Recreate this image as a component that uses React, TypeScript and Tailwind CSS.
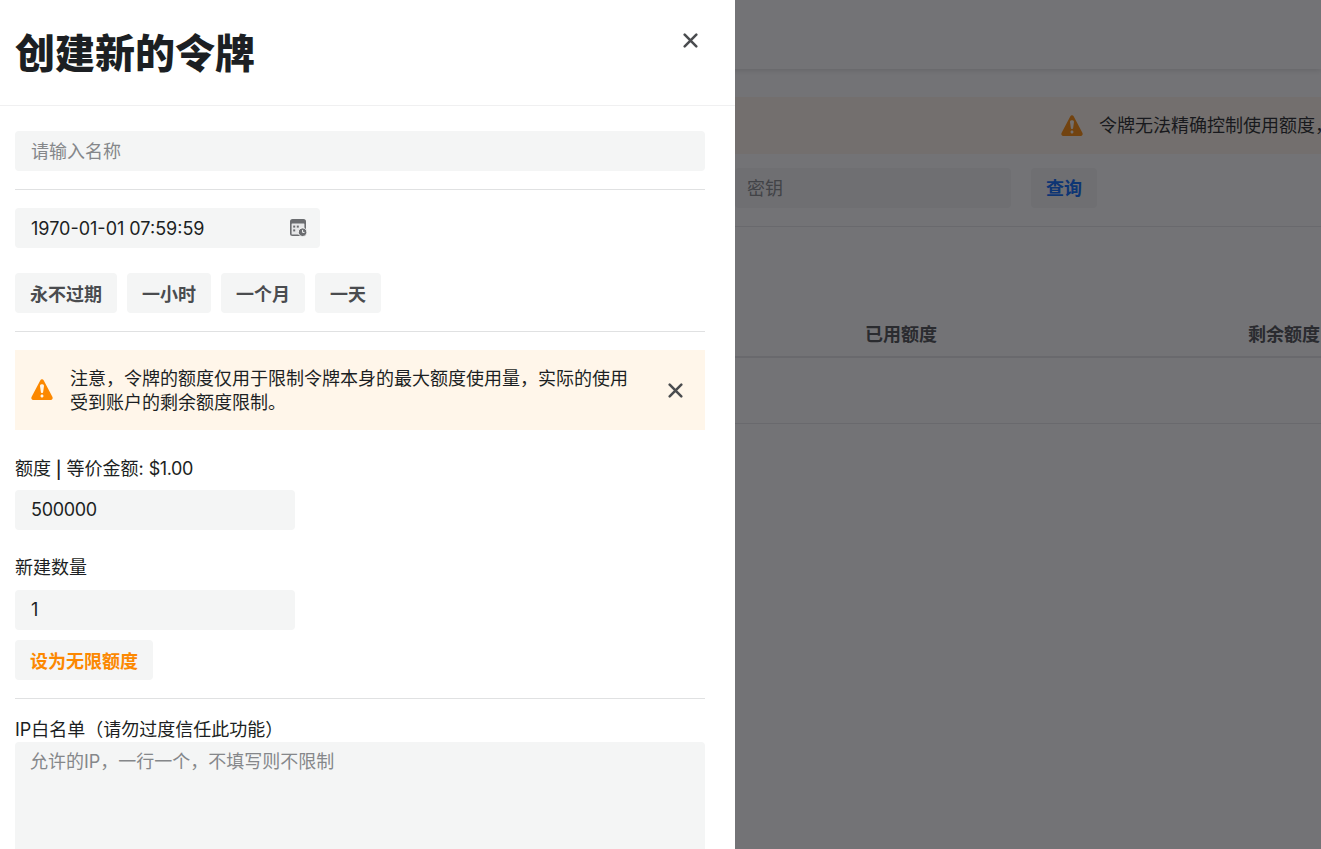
const FONT = "font-['Inter','Noto_Sans_CJK_SC',sans-serif]";

function AlertTriangle({ className }: { className: string }) {
  return (
    <svg viewBox="0 0 24 24" fill="currentColor" className={className}>
      <path
        fillRule="evenodd"
        clipRule="evenodd"
        d="M10.2268 2.3986L1.52616 19.0749C0.831449 20.4064 1.79747 22 3.29933 22H20.7007C22.2025 22 23.1686 20.4064 22.4739 19.0749L13.7732 2.3986C13.0254 0.965441 10.9746 0.965442 10.2268 2.3986ZM13.1415 14.0101C13.0603 14.5781 12.5739 15 12 15C11.4261 15 10.9397 14.5781 10.8585 14.0101L10.0141 8.09909C9.87615 7.13303 10.6258 6.27 11.6 6.27H12.4C13.3742 6.27 14.1239 7.13303 13.9859 8.09909L13.1415 14.0101ZM13.5 18C13.5 18.8284 12.8284 19.5 12 19.5C11.1716 19.5 10.5 18.8284 10.5 18C10.5 17.1716 11.1716 16.5 12 16.5C12.8284 16.5 13.5 17.1716 13.5 18Z"
      />
    </svg>
  );
}

function CloseX({ className }: { className: string }) {
  return (
    <svg viewBox="0 0 16 16" fill="none" stroke="currentColor" strokeWidth="2.7" strokeLinecap="round" className={className}>
      <path d="M1.8 1.8 14.2 14.2M14.2 1.8 1.8 14.2" />
    </svg>
  );
}

function DateIcon() {
  return (
    <svg viewBox="0 0 17 18" className="w-[17px] h-[18px] text-[#6b6d70]" fill="none">
      <rect x="0" y="0" width="16" height="17" rx="2.5" fill="currentColor" />
      <rect x="1.6" y="4.6" width="12.8" height="10.8" rx="0.5" fill="#e6e7e8" />
      <rect x="3.2" y="6.6" width="2" height="2" fill="currentColor" />
      <rect x="6.8" y="6.6" width="2" height="2" fill="currentColor" />
      <rect x="3.2" y="10.4" width="2" height="2" fill="currentColor" />
      <circle cx="12.6" cy="13.2" r="4.3" fill="currentColor" stroke="#f4f5f5" strokeWidth="1" />
      <path d="M12.6 10.9v2.5h1.9" stroke="#f4f5f5" strokeWidth="1" />
    </svg>
  );
}

function Divider() {
  return <div className="h-px bg-[#e0e1e2] my-[18px]" />;
}

function Btn({ children, orange }: { children: React.ReactNode; orange?: boolean }) {
  return (
    <button
      className={`h-10 px-[15px] pt-[2px] rounded-[4px] bg-[#f4f5f5] text-[18px] font-bold leading-[25px] ${
        orange ? "text-[#fc8800]" : "text-[#4a4c4f]"
      }`}
    >
      {children}
    </button>
  );
}

function Field({ value, className }: { value: string; className: string }) {
  return (
    <div className={`h-10 rounded-[4px] bg-[#f4f5f5] px-4 text-[18px] leading-10 text-[#1c1f23] ${className}`}>{value}</div>
  );
}

function Background() {
  return (
    <div className="h-full w-full bg-white pl-[735px] overflow-hidden">
      <div className="h-[69px] -ml-[735px] bg-white shadow-[0_1px_6px_rgba(0,0,0,0.16)]" />
      <div className="mt-[28px] h-[57px] bg-[#fff6ea] flex items-center pl-[325px] whitespace-nowrap">
        <AlertTriangle className="w-6 h-6 text-[#fc8800] shrink-0" />
        <span className="ml-[15px] text-[18px] text-[#1c1f23]">令牌无法精确控制使用额度，</span>
      </div>
      <div className="mt-[14px] flex h-10">
        <div className="w-[276px] h-10 rounded-[4px] bg-[#f4f5f5] pl-3 text-[18px] leading-[41px] text-[#85878a]">密钥</div>
        <div className="ml-5 w-[66px] h-10 rounded-[4px] bg-[#f4f5f5] text-center text-[18px] leading-[41px] font-bold text-[#0064fa]">查询</div>
      </div>
      <div className="mt-[18px] h-px bg-[#e6e7e8]" />
      <div className="mt-[96px] h-[35px] flex whitespace-nowrap border-b-2 border-[#e6e7e8] text-[18px] leading-6 font-bold text-[#4a4c4f]">
        <span className="ml-[130px]">已用额度</span>
        <span className="ml-[311px]">剩余额度</span>
      </div>
      <div className="h-[66px] border-b border-[#e6e7e8]" />
    </div>
  );
}

function Sheet() {
  return (
    <div className="absolute left-0 top-0 bottom-0 w-[735px] bg-white overflow-hidden text-[#1c1f23]">
      <div className="h-[106px] border-b border-[#f0f0f1] px-[15px] flex justify-between">
        <h1 className="text-[40px] font-black leading-[108px]">创建新的令牌</h1>
        <button className="w-5 h-5 mt-[30px] mr-[20px] text-[#4a4c4f] flex items-center justify-center">
          <CloseX className="w-[15px] h-[15px]" />
        </button>
      </div>
      <div className="pt-[25px] pl-[15px] pr-[30px]">
        <div className="h-10 rounded-[4px] bg-[#f4f5f5] px-4 text-[18px] leading-[41px] text-[#85878a]">请输入名称</div>
        <Divider />
        <div className="w-[305px] h-10 rounded-[4px] bg-[#f4f5f5] pl-4 pr-[13px] flex items-center justify-between text-[18px] text-[#1c1f23]">
          <span>1970-01-01 07:59:59</span>
          <DateIcon />
        </div>
        <div className="mt-[25px] flex gap-[10px]">
          <Btn>永不过期</Btn>
          <Btn>一小时</Btn>
          <Btn>一个月</Btn>
          <Btn>一天</Btn>
        </div>
        <Divider />
        <div className="h-20 bg-[#fff6ea] flex items-center pl-[15px] pr-[20px]">
          <AlertTriangle className="w-6 h-6 text-[#fc8800] shrink-0" />
          <p className="ml-[16px] w-[560px] pt-px text-[18px] leading-6 text-[#1c1f23]">
            注意，令牌的额度仅用于限制令牌本身的最大额度使用量，实际的使用受到账户的剩余额度限制。
          </p>
          <CloseX className="ml-auto mr-[2px] w-[15px] h-[15px] text-[#4a4c4f]" />
        </div>
        <div className="mt-[25px] h-[35px] text-[18px] leading-[24px] whitespace-nowrap">
          额度 <span className="font-bold font-['Noto_Sans_CJK_SC',sans-serif]">|</span> 等价金额: <span className="tracking-[-0.4px]">$1.00</span>
        </div>
        <Field value="500000" className="w-[280px] tracking-[-0.3px]" />
        <div className="mt-[25px] h-[35px] text-[18px] leading-[26px]">新建数量</div>
        <Field value="1" className="w-[280px]" />
        <div className="mt-[10px]">
          <Btn orange>设为无限额度</Btn>
        </div>
        <Divider />
        <div className="h-[25px] text-[18px] leading-[25px] mt-[1px]">IP白名单（请勿过度信任此功能）</div>
        <div className="h-[140px] rounded-[4px] bg-[#f4f5f5] px-[15px] pt-[6px] text-[18px] leading-[27px] text-[#85878a]">
          允许的IP，一行一个，不填写则不限制
        </div>
      </div>
    </div>
  );
}

export default function App() {
  return (
    <div className={`relative h-screen w-full overflow-hidden ${FONT}`}>
      <Background />
      <div className="absolute inset-0 bg-[rgba(22,22,26,0.6)]" />
      <Sheet />
    </div>
  );
}
